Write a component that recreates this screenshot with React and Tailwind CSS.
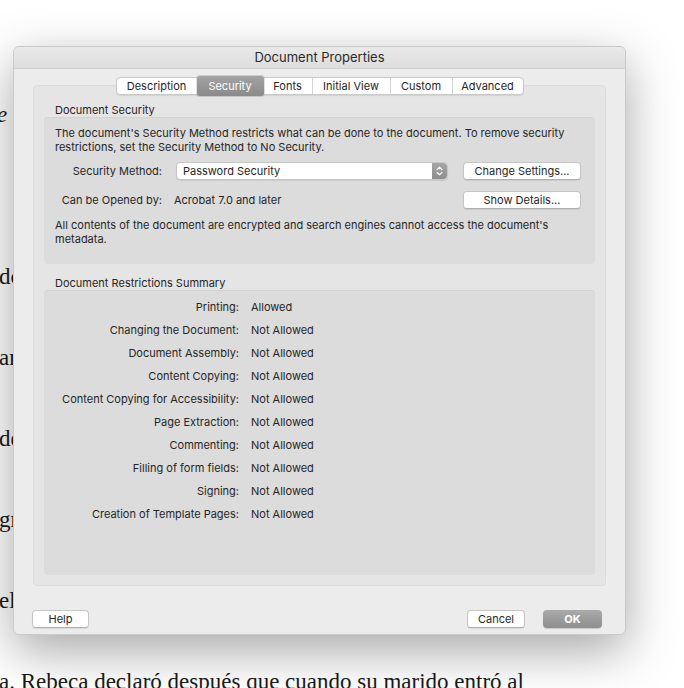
const tabs = [
  { label: "Description", w: "w-[80px]" },
  { label: "Security", w: "w-[67px]", active: true },
  { label: "Fonts", w: "w-[48px]" },
  { label: "Initial View", w: "w-[78px]" },
  { label: "Custom", w: "w-[62px]" },
  { label: "Advanced", w: "w-[71px]" }
];

const restrictions = [
  ["Printing:", "Allowed"],
  ["Changing the Document:", "Not Allowed"],
  ["Document Assembly:", "Not Allowed"],
  ["Content Copying:", "Not Allowed"],
  ["Content Copying for Accessibility:", "Not Allowed"],
  ["Page Extraction:", "Not Allowed"],
  ["Commenting:", "Not Allowed"],
  ["Filling of form fields:", "Not Allowed"],
  ["Signing:", "Not Allowed"],
  ["Creation of Template Pages:", "Not Allowed"]
];

const pageLines = [
  { text: "e su esposa había salido aquella tarde sin decir a nadie", italic: true },
  { text: "\u00a0" },
  { text: "do el camino que lleva hasta la casa de sus padres." },
  { text: "ar la puerta, encontró la sala completamente vacía." },
  { text: "de pronto escuchó un ruido que venía del jardín." },
  { text: "gritó su nombre varias veces, pero nadie respondió." },
  { text: "el silencio de la noche cubría toda la casa." },
  { text: "a. Rebeca declaró después que cuando su marido entró al" }
];

function Button({ children, className = "" }) {
  return (
    <div
      className={`flex h-[18px] items-center justify-center rounded-[4px] border border-[#c6c6c6] border-b-[#b0b0b0] bg-white text-[11px] text-[#262626] shadow-[0_1px_1px_rgba(0,0,0,0.08)] ${className}`}
    >
      {children}
    </div>
  );
}

function Stepper() {
  return (
    <div className="flex h-full w-[15px] items-center justify-center rounded-r-[4px] bg-gradient-to-b from-[#a7a7a7] to-[#8d8d8d]">
      <svg width="7" height="10" viewBox="0 0 7 10" fill="none">
        <path d="M1 3.6 L3.5 1.3 L6 3.6" stroke="white" strokeWidth="1.2" strokeLinecap="round" strokeLinejoin="round" />
        <path d="M1 6.4 L3.5 8.7 L6 6.4" stroke="white" strokeWidth="1.2" strokeLinecap="round" strokeLinejoin="round" />
      </svg>
    </div>
  );
}

export default function App() {
  return (
    <div className="relative h-[688px] w-full overflow-hidden bg-white">
      <div className="pt-[74px] font-['Liberation_Serif',serif] text-[23px] text-[#1a1a1a]">
        {pageLines.map((line, i) => (
          <p key={i} className={`-ml-[1px] whitespace-nowrap leading-[81px] ${line.italic ? "-ml-[3px] italic" : ""}`}>
            {line.text}
          </p>
        ))}
      </div>

      <div className="absolute left-[13px] top-[46px] flex h-[589px] w-[613px] flex-col rounded-[6px] border border-[#c9c9c9] bg-[#ececec] font-['Inter','Liberation_Sans',sans-serif] text-[#262626] shadow-[0_16px_50px_rgba(0,0,0,0.35)]">
        <div className="flex h-[22px] shrink-0 items-center justify-center rounded-t-[6px] border-b border-[#d0d0d0] bg-gradient-to-b from-[#e9e9e9] to-[#dedede] pt-[1px] text-[13px] text-[#2b2b2b]">
          Document Properties
        </div>

        <div className="relative z-10 mt-[8px] flex justify-center">
          <div className="flex h-[18px] rounded-[4px] border border-[#c8c8c8] bg-white shadow-[0_1px_1px_rgba(0,0,0,0.08)]">
            {tabs.map((tab, i) => (
              <div
                key={tab.label}
                className={`flex items-center justify-center text-[11px] ${tab.w} ${
                  tab.active
                    ? "-my-[2px] rounded-[3px] bg-gradient-to-b from-[#a3a3a3] to-[#8a8a8a] text-white shadow-[0_0_0_1px_rgba(0,0,0,0.12)]"
                    : i > 0 && !tabs[i - 1].active
                    ? "border-l border-[#d4d4d4]"
                    : ""
                }`}
              >
                {tab.label}
              </div>
            ))}
          </div>
        </div>

        <div className="mx-[19px] -mt-[10px] flex h-[501px] flex-col rounded-[4px] border border-[#dcdcdc] bg-[#e5e5e5] px-[10px] pt-[17px]">
          <div className="pl-[11px] text-[11px] leading-[14px]">Document Security</div>
          <div className="flex h-[147px] flex-col rounded-[4px] bg-[#dcdcdc] pl-[11px] pr-[14px] pt-[9px] shadow-[inset_0_1px_0_rgba(0,0,0,0.04)]">
            <p className="text-[11px] leading-[14px]">
              The document's Security Method restricts what can be done to the document. To remove security
              restrictions, set the Security Method to No Security.
            </p>
            <div className="-ml-[11px] mt-[8px] flex h-[18px] items-center">
              <div className="w-[118px] text-right text-[11px]">Security Method:</div>
              <div className="ml-[14px] flex h-[18px] w-[272px] items-center rounded-[4px] border border-[#c6c6c6] bg-white shadow-[0_1px_1px_rgba(0,0,0,0.08)]">
                <div className="flex-1 pl-[6px] text-[11px]">Password Security</div>
                <Stepper />
              </div>
              <Button className="ml-[15px] w-[118px]">Change Settings...</Button>
            </div>
            <div className="-ml-[11px] mt-[11px] flex h-[18px] items-center">
              <div className="w-[118px] text-right text-[11px]">Can be Opened by:</div>
              <div className="ml-[12px] flex-1 text-[11px]">Acrobat 7.0 and later</div>
              <Button className="w-[118px]">Show Details...</Button>
            </div>
            <p className="mt-[9px] text-[11px] leading-[14px]">
              All contents of the document are encrypted and search engines cannot access the document's
              metadata.
            </p>
          </div>

          <div className="mt-[12px] pl-[11px] text-[11px] leading-[14px]">Document Restrictions Summary</div>
          <div className="h-[285px] rounded-[4px] bg-[#dcdcdc] pt-[6px] shadow-[inset_0_1px_0_rgba(0,0,0,0.04)]">
            {restrictions.map(([label, value]) => (
              <div key={label} className="flex h-[23px] items-center text-[11px]">
                <div className="w-[195px] text-right">{label}</div>
                <div className="ml-[12px]">{value}</div>
              </div>
            ))}
          </div>
        </div>

        <div className="mt-[24px] flex items-center pl-[18px] pr-[23px]">
          <Button className="w-[57px]">Help</Button>
          <div className="flex-1" />
          <Button className="w-[58px]">Cancel</Button>
          <div className="ml-[18px] flex h-[18px] w-[59px] items-center justify-center rounded-[4px] bg-gradient-to-b from-[#aaaaaa] to-[#8e8e8e] text-[11px] font-bold text-white shadow-[0_1px_1px_rgba(0,0,0,0.15)]">
            OK
          </div>
        </div>
      </div>
    </div>
  );
}
